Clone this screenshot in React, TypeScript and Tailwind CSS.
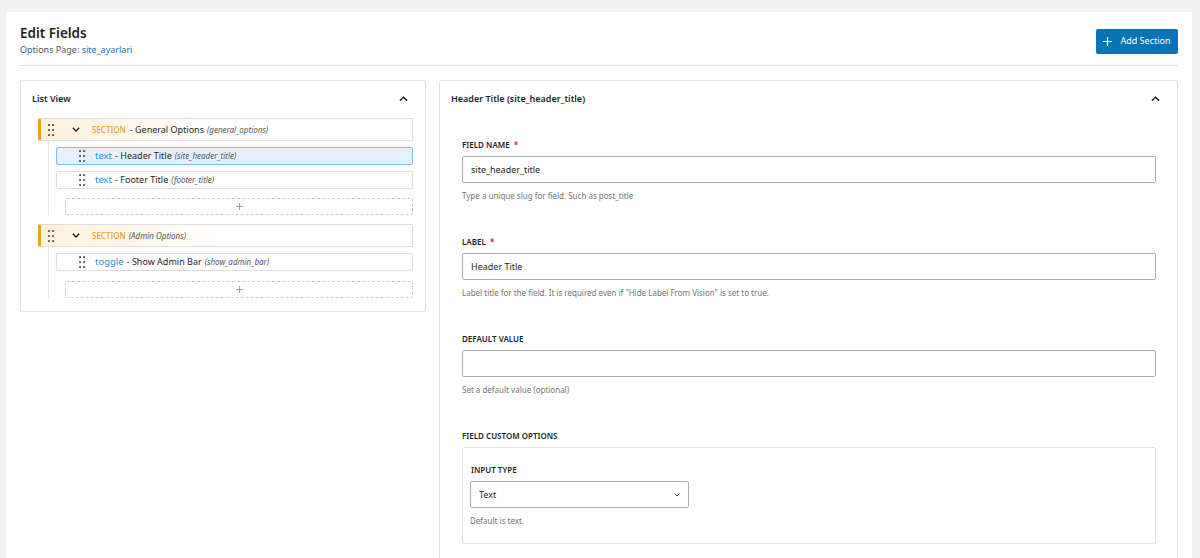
import React from "react";

const font = { fontFamily: '"Noto Sans", "Open Sans", sans-serif' };

function DragHandle() {
  return (
    <svg width="6" height="12" viewBox="0 0 6 12" className="shrink-0">
      {[0, 1].map((c) =>
        [0, 1, 2].map((r) => (
          <rect key={`${c}-${r}`} x={c * 4 + 0.2} y={r * 5 + 0.2} width="1.7" height="1.7" fill="#2c3338" />
        ))
      )}
    </svg>
  );
}

function ChevronDown({ size = 8, stroke = 1.6 }: { size?: number; stroke?: number }) {
  return (
    <svg width={size} height={size * 0.6} viewBox="0 0 10 6" className="shrink-0">
      <path d="M1 1l4 4 4-4" fill="none" stroke="#1e1e1e" strokeWidth={stroke} />
    </svg>
  );
}

function ChevronUp() {
  return (
    <svg width="9" height="6" viewBox="0 0 10 6" className="shrink-0">
      <path d="M1 5l4-4 4 4" fill="none" stroke="#1e1e1e" strokeWidth="1.6" />
    </svg>
  );
}

function SectionRow({ name, slug }: { name?: string; slug: string }) {
  return (
    <div className="flex items-center h-[23px] border border-[#dcdcde] border-l-[3px] border-l-[#f0a21f] rounded-[2px] bg-gradient-to-r from-[#fdf1d9] via-white to-white">
      <div className="ml-[7px]">
        <DragHandle />
      </div>
      <div className="ml-[18px]">
        <ChevronDown />
      </div>
      <div className="ml-[12px] flex items-baseline whitespace-nowrap">
        <span className="text-[8px] text-[#f0a21f] font-medium">SECTION</span>
        {name ? <span className="ml-[4px] text-[9px] text-[#1e1e1e]">- {name}</span> : null}
        <span className="ml-[3px] text-[8px] italic text-[#50575e]">({slug})</span>
      </div>
    </div>
  );
}

function FieldRow({ type, name, slug, selected }: { type: string; name: string; slug: string; selected?: boolean }) {
  return (
    <div
      className={
        "flex items-center h-[18px] border rounded-[2px] " +
        (selected ? "bg-[#e5f1fc] border-[#7db9ef]" : "bg-white border-[#dcdcde]")
      }
    >
      <div className="ml-[22px]">
        <DragHandle />
      </div>
      <div className="ml-[10px] flex items-baseline whitespace-nowrap">
        <span className="text-[9.5px] text-[#2d8de8]">{type}</span>
        <span className="ml-[3px] text-[9px] text-[#1e1e1e]">- {name}</span>
        <span className="ml-[3px] text-[8px] italic text-[#50575e]">({slug})</span>
      </div>
    </div>
  );
}

function AddPlaceholder() {
  return (
    <div className="ml-[9px] h-[17px] border border-dashed border-[#c9c9cc] rounded-[2px] flex items-center justify-center">
      <svg width="7" height="7" viewBox="0 0 7 7">
        <path d="M3.5 0v7M0 3.5h7" stroke="#9a9da1" strokeWidth="1" />
      </svg>
    </div>
  );
}

function Field({
  label,
  required,
  value,
  help,
}: {
  label: string;
  required?: boolean;
  value: string;
  help: string;
}) {
  return (
    <div>
      <div className="text-[8px] leading-[12px] font-semibold text-[#1e1e1e] uppercase">
        {label}
        {required ? <span className="text-[#cc1818] ml-[2px]"> *</span> : null}
      </div>
      <div className="mt-[5px] h-[27px] border border-[#adadad] rounded-[2px] flex items-center pl-[8px] text-[9px] text-[#1e1e1e]">
        {value}
      </div>
      <div className="mt-[7px] text-[8px] leading-[12px] text-[#757575]">{help}</div>
    </div>
  );
}

export default function App() {
  return (
    <div style={font} className="min-h-screen bg-[#f0f0f1] pt-[12px] pl-[6px] pr-[8px]">
      <div className="bg-white min-h-[546px] px-[14px] pt-[11px]">
        <div className="flex items-center justify-between border-b border-[#dcdcde] pb-[8px]">
          <div>
            <div className="text-[13.5px] leading-[20px] font-semibold text-[#1e1e1e]">Edit Fields</div>
            <div className="text-[9px] leading-[14px] text-[#50575e]">
              Options Page: <span className="text-[#2271b1]">site_ayarlari</span>
            </div>
          </div>
          <button className="h-[25px] w-[82px] bg-[#0a73b4] rounded-[2px] flex items-center justify-center gap-[8px] text-white text-[9px] mt-[2px]">
            <svg width="9" height="9" viewBox="0 0 9 9">
              <path d="M4.5 0v9M0 4.5h9" stroke="white" strokeWidth="1.2" />
            </svg>
            Add Section
          </button>
        </div>

        <div className="mt-[14px] flex items-start gap-[13px]">
          <div className="w-[406px] shrink-0 border border-[#e0e0e0] rounded-[3px]">
            <div className="h-[35px] flex items-center justify-between pl-[11px] pr-[17px]">
              <span className="text-[9px] font-semibold text-[#1e1e1e]">List View</span>
              <ChevronUp />
            </div>
            <div className="pl-[17px] pr-[12px] pt-[2px] pb-[13px]">
              <SectionRow name="General Options" slug="general_options" />
              <div className="ml-[10px] border-l border-[#e6e6e6] pl-[7px] pt-[6px] flex flex-col">
                <FieldRow type="text" name="Header Title" slug="site_header_title" selected />
                <div className="mt-[6px]">
                  <FieldRow type="text" name="Footer Title" slug="footer_title" />
                </div>
                <div className="mt-[9px]">
                  <AddPlaceholder />
                </div>
              </div>
              <div className="mt-[9px]">
                <SectionRow slug="Admin Options" />
              </div>
              <div className="ml-[10px] border-l border-[#e6e6e6] pl-[7px] pt-[6px] flex flex-col">
                <FieldRow type="toggle" name="Show Admin Bar" slug="show_admin_bar" />
                <div className="mt-[10px]">
                  <AddPlaceholder />
                </div>
              </div>
            </div>
          </div>

          <div className="flex-1 border border-[#e0e0e0] rounded-[3px] min-h-[480px]">
            <div className="h-[35px] flex items-center justify-between pl-[11px] pr-[17px]">
              <span className="text-[9px] font-semibold text-[#1e1e1e]">Header Title (site_header_title)</span>
              <ChevronUp />
            </div>
            <div className="pl-[22px] pr-[21px] pt-[23px] flex flex-col gap-[34px]">
              <Field
                label="Field Name"
                required
                value="site_header_title"
                help="Type a unique slug for field. Such as post_title"
              />
              <Field
                label="Label"
                required
                value="Header Title"
                help={'Label title for the field. It is required even if "Hide Label From Vision" is set to true.'}
              />
              <Field label="Default Value" value="" help="Set a default value (optional)" />
              <div>
                <div className="text-[8px] leading-[12px] font-semibold text-[#1e1e1e] uppercase">
                  Field Custom Options
                </div>
                <div className="mt-[5px] border border-[#e0e0e0] rounded-[3px] pl-[7px] pt-[16px] pb-[16px]">
                  <div className="ml-[1px] text-[8px] leading-[12px] font-semibold text-[#1e1e1e] uppercase">
                    Input Type
                  </div>
                  <div className="mt-[5px] w-[219px] h-[27px] border border-[#adadad] rounded-[2px] flex items-center justify-between pl-[8px] pr-[8px] text-[9px] text-[#1e1e1e]">
                    <span>Text</span>
                    <ChevronDown size={6} stroke={1.3} />
                  </div>
                  <div className="mt-[7px] text-[8px] leading-[12px] text-[#757575]">Default is text.</div>
                </div>
              </div>
            </div>
          </div>
        </div>
      </div>
    </div>
  );
}
